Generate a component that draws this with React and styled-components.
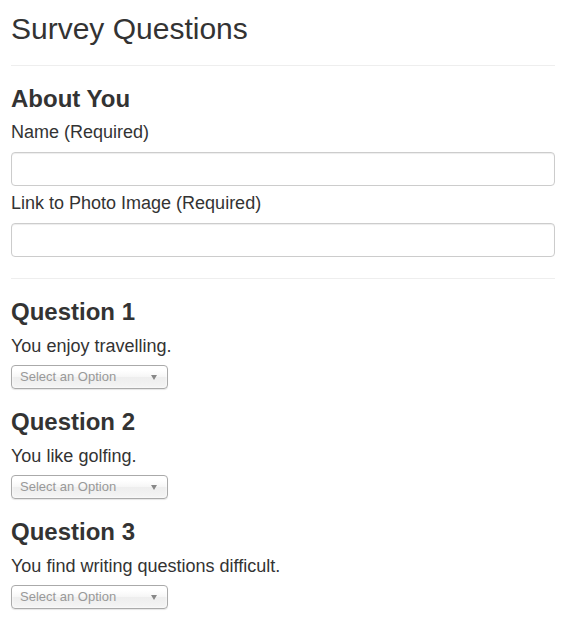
import React from 'react'
import styled, { createGlobalStyle } from 'styled-components'

const GlobalStyle = createGlobalStyle`
  html, body {
    margin: 0;
    padding: 0;
    background: #fff;
  }
  body {
    font-family: "Liberation Sans", Arial, Helvetica, sans-serif;
    color: #333;
  }
  * {
    box-sizing: border-box;
  }
`

const Page = styled.main`
  display: flex;
  flex-direction: column;
  padding: 12px 12px 20px 11px;
`

const Title = styled.h2`
  margin: 0;
  font-size: 30px;
  line-height: 33px;
  font-weight: 400;
  color: #333;
`

const Rule = styled.hr`
  margin: ${props => props.margin ? props.margin : '20px 0'};
  border: 0;
  border-top: 1px solid #eee;
  height: 0;
`

const Section = styled.section`
  display: flex;
  flex-direction: column;
`

const Heading = styled.h3`
  margin: 0 0 ${props => props.gap ? props.gap : '10px'} 0;
  font-size: 24px;
  line-height: 26px;
  font-weight: 700;
  color: #333;
`

const Label = styled.label`
  display: block;
  margin: 0 0 10px 0;
  font-size: 18px;
  line-height: 20px;
  font-weight: 400;
`

const Field = styled.div`
  display: flex;
  flex-direction: column;
  & + & {
    margin-top: 7px;
  }
`

const TextInput = styled.input`
  display: block;
  width: 100%;
  height: 34px;
  padding: 6px 12px;
  font-family: inherit;
  font-size: 14px;
  color: #555;
  background: #fff;
  border: 1px solid #ccc;
  border-radius: 4px;
  box-shadow: inset 0 1px 1px rgba(0, 0, 0, 0.075);
  outline: none;
`

const Question = styled.div`
  display: flex;
  flex-direction: column;
  align-items: flex-start;
  & + & {
    margin-top: 20px;
  }
`

const Prompt = styled.p`
  margin: 0 0 9px 0;
  font-size: 18px;
  line-height: 20px;
`

const Select = styled.div`
  position: relative;
  display: flex;
  align-items: center;
  width: 157px;
  height: 24px;
  padding: 0 8px;
  border: 1px solid #aaa;
  border-radius: 4px;
  background: linear-gradient(#fff 20%, #f6f6f6 50%, #eee 52%, #f4f4f4 100%);
  box-shadow: inset 0 0 3px #fff, 0 1px 1px rgba(0, 0, 0, 0.1);
  font-size: 13px;
  line-height: 22px;
  color: #999;
  cursor: pointer;
  white-space: nowrap;
  &::after {
    content: '';
    position: absolute;
    right: 10px;
    top: 9px;
    border-left: 3px solid transparent;
    border-right: 3px solid transparent;
    border-top: 5px solid #888;
  }
`

const questions = [
  'You enjoy travelling.',
  'You like golfing.',
  'You find writing questions difficult.'
]

export default function App () {
  return (
    <>
      <GlobalStyle />
      <Page>
        <Title>Survey Questions</Title>
        <Rule />
        <Section>
          <Heading>About You</Heading>
          <Field>
            <Label htmlFor='name'>Name (Required)</Label>
            <TextInput id='name' type='text' />
          </Field>
          <Field>
            <Label htmlFor='photo'>Link to Photo Image (Required)</Label>
            <TextInput id='photo' type='text' />
          </Field>
        </Section>
        <Rule margin='21px 0 20px 0' />
        <Section>
          {questions.map((text, i) => (
            <Question key={i}>
              <Heading gap='11px'>Question {i + 1}</Heading>
              <Prompt>{text}</Prompt>
              <Select>Select an Option</Select>
            </Question>
          ))}
        </Section>
      </Page>
    </>
  )
}
